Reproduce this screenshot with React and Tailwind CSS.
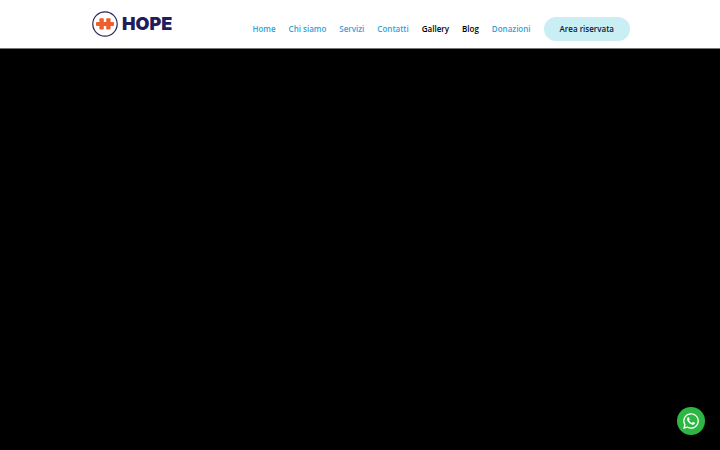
import { FaWhatsapp } from "react-icons/fa"

const links = [
    { label: "Home" },
    { label: "Chi siamo" },
    { label: "Servizi" },
    { label: "Contatti" },
    { label: "Gallery", dark: true },
    { label: "Blog", dark: true },
    { label: "Donazioni" },
]

const LogoMark = () => (
    <svg viewBox="0 0 26 26" className="h-[26px] w-[26px]" aria-hidden="true">
        <circle cx="13" cy="13" r="12.2" fill="#fff" stroke="#29275a" strokeWidth="1.2" />
        <g fill="#ee5f2b">
            <rect x="7.4" y="7.3" width="4.4" height="11.2" rx="0.8" />
            <rect x="14.2" y="7.3" width="4.4" height="11.2" rx="0.8" />
            <rect x="4" y="11" width="18" height="4" rx="1" />
        </g>
    </svg>
)

const Header = () => (
    <header className="border-b border-[#777777] bg-white">
        <div className="mx-auto flex h-12 w-3/4 items-center justify-between">
            <a href="#" className="flex items-center gap-1 pl-0.5" aria-label="Hope">
                <LogoMark />
                <span className="font-['Inter',sans-serif] text-[18px] leading-6 font-black text-[#211c5e]">HOPE</span>
            </a>
            <nav className="flex items-center gap-[13px] pt-[9px] text-[8px] font-semibold">
                {links.map(({ label, dark }) => (
                    <a key={label} href="#" className={dark ? "text-black" : "text-[#2ea3d9]"}>
                        {label}
                    </a>
                ))}
                <a href="#" className="rounded-full bg-[#c9eff4] px-4 py-1.5 leading-3 text-[#0b1638]">
                    Area riservata
                </a>
            </nav>
        </div>
    </header>
)

const App = () => {
    return (
        <div className="flex min-h-screen flex-col bg-black font-['Open_Sans',sans-serif]">
            <Header />
            <main className="flex-1 bg-black" />
            <a
                href="#"
                aria-label="WhatsApp"
                className="fixed right-[15px] bottom-[15px] flex h-7 w-7 items-center justify-center rounded-full bg-[#2db742] text-white"
            >
                <FaWhatsapp size={18} />
            </a>
        </div>
    )
}

export default App
